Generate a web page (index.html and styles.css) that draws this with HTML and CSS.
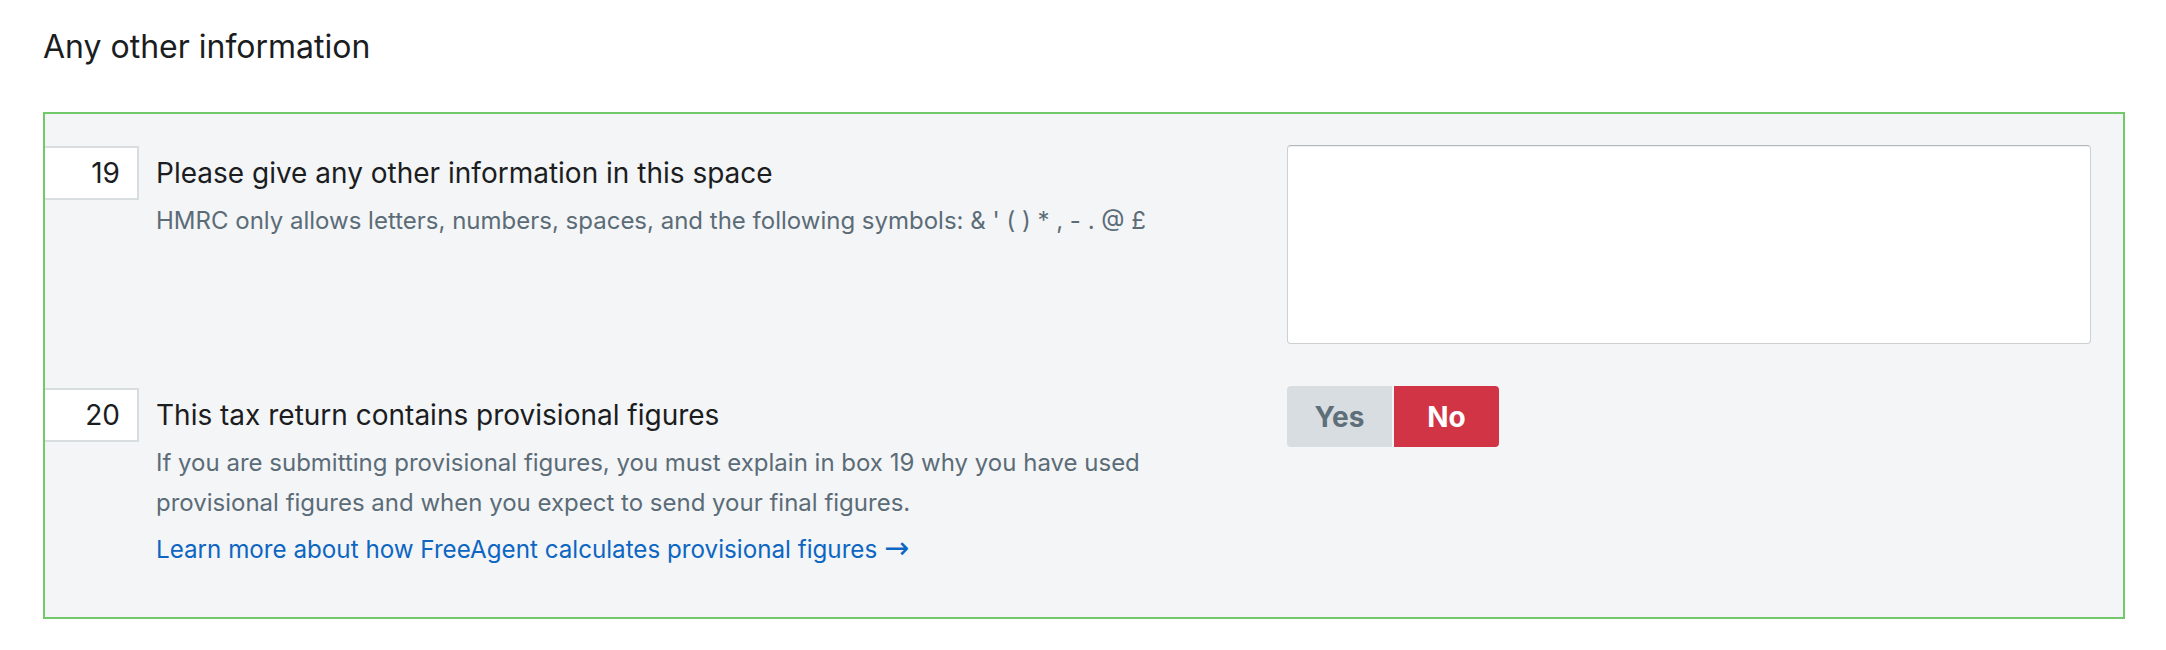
FILE: index.html
```html
<!DOCTYPE html>
<html lang="en">
<head>
    <meta charset="UTF-8">
    <meta name="viewport" content="width=device-width, initial-scale=1.0">
    <title>Any other information</title>
    <link rel="stylesheet" href="styles.css">
</head>
<body>
    <h2 class="section-title">Any other information</h2>

    <div class="section-box">
        <div class="field-row">
            <div class="field-info">
                <div class="box-number">19</div>
                <div class="field-text">
                    <label class="field-label" for="otherInfo">Please give any other information in this space</label>
                    <p class="field-hint">HMRC only allows letters, numbers, spaces, and the following symbols: &amp; ' ( ) * , - . @ £</p>
                </div>
            </div>
            <div class="field-input">
                <textarea id="otherInfo"></textarea>
            </div>
        </div>

        <div class="field-row">
            <div class="field-info">
                <div class="box-number">20</div>
                <div class="field-text">
                    <span class="field-label">This tax return contains provisional figures</span>
                    <p class="field-hint">If you are submitting provisional figures, you must explain in box 19 why you have used provisional figures and when you expect to send your final figures.</p>
                    <a class="field-link" href="#">Learn more about how FreeAgent calculates provisional figures <span class="arrow">→</span></a>
                </div>
            </div>
            <div class="field-input">
                <div class="toggle">
                    <button type="button" class="toggle-yes">Yes</button>
                    <button type="button" class="toggle-no">No</button>
                </div>
            </div>
        </div>
    </div>
</body>
</html>
```
FILE: styles.css
```css
* {
    box-sizing: border-box;
}
body {
    margin: 0;
    font-family: Inter, "Noto Sans", sans-serif;
    color: #1b1d1f;
    background: #fff;
}
.section-title {
    margin: 0;
    padding: 27px 0 0 43px;
    font-size: 32px;
    font-weight: 400;
    line-height: 40px;
}
.section-box {
    margin: 45px 41px 0 43px;
    padding: 31px 32px 47px 0;
    border: 2px solid #72c86b;
    background: #f4f5f7;
}
.field-row {
    display: grid;
    grid-template-columns: 1fr 804px;
    column-gap: 40px;
}
.field-row + .field-row {
    margin-top: 43px;
}
.field-info {
    display: flex;
    align-items: flex-start;
}
.box-number {
    flex: 0 0 94px;
    height: 54px;
    margin-top: 1px;
    padding-right: 17px;
    border: 2px solid #d8dde0;
    border-left: none;
    background: #fff;
    font-size: 28px;
    line-height: 50px;
    text-align: right;
}
.field-text {
    max-width: 1070px;
    margin-left: 17px;
}
.field-label {
    display: block;
    margin-top: 1px;
    font-size: 28px;
    line-height: 54px;
}
.field-hint {
    margin: 1px 0 0;
    font-size: 24px;
    line-height: 40px;
    color: #5b6c77;
}
.field-link {
    display: block;
    margin-top: 7px;
    font-size: 24.2px;
    line-height: 40px;
    color: #0c66c2;
    text-decoration: none;
}
.field-link .arrow {
    font-family: "DejaVu Sans", sans-serif;
    font-size: 30px;
    line-height: 1;
}
.field-input textarea {
    display: block;
    width: 804px;
    height: 199px;
    border: 1px solid #ccd0d3;
    border-top-color: #b4b8bb;
    border-radius: 4px;
    box-shadow: inset 0 1px 0 rgba(0, 0, 0, 0.06);
    background: #fff;
    resize: none;
}
.toggle {
    display: flex;
    gap: 2px;
    margin-top: -1px;
}
.toggle button {
    width: 105px;
    height: 61px;
    border: none;
    font-family: Inter, "Noto Sans", sans-serif;
    font-size: 28px;
    font-weight: 700;
}
.toggle-yes {
    background: #d7dde0;
    color: #5e6f79;
    border-radius: 4px 0 0 4px;
}
.toggle-no {
    background: #d13445;
    color: #fff;
    border-radius: 0 4px 4px 0;
}
```
